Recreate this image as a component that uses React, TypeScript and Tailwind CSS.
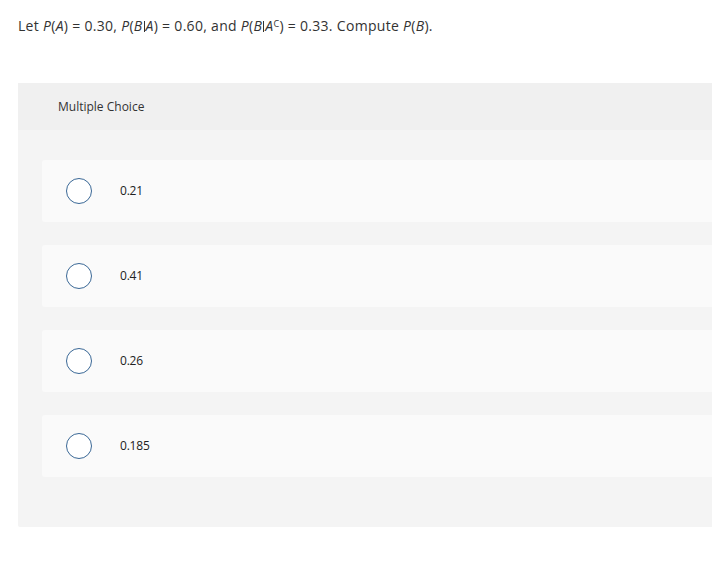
import React from "react";

const font = { fontFamily: '"Open Sans", "Liberation Sans", sans-serif' };

function I({ children }: { children: React.ReactNode }) {
  return <span className="italic">{children}</span>;
}

function Bar() {
  return <span className="inline-block w-[1px] h-[11px] bg-[#333] mx-[1px] align-[-1px]" />;
}

const options = ["0.21", "0.41", "0.26", "0.185"];

export default function App() {
  return (
    <div className="w-[712px] h-[565px] overflow-hidden bg-white text-[#333]" style={font}>
      <div className="pl-[18px] pt-[16px] h-[83px] text-[14px] leading-[20px] tracking-[0.3px]">
        Let <I>P</I>(<I>A</I>) = 0.30, <I>P</I>(<I>B</I>
        <Bar />
        <I>A</I>) = 0.60, and <I>P</I>(<I>B</I>
        <Bar />
        <I>A</I>
        <sup className="text-[9px] not-italic">C</sup>) = 0.33. Compute <I>P</I>(<I>B</I>).
      </div>
      <div className="ml-[18px] w-[720px] rounded-l-[2px] bg-[#f4f4f4]">
        <div className="h-[47px] bg-[#f0f0f0] pl-[40px] flex items-center text-[12px] text-[#333]">
          Multiple Choice
        </div>
        <div className="pt-[30px] pb-[50px] pl-[24px] flex flex-col gap-[23px]">
          {options.map((o) => (
            <div key={o} className="h-[62px] bg-[#fafafa] rounded-l-[3px] flex items-center pl-[24px]">
              <div className="w-[26px] h-[26px] rounded-full border-[1.5px] border-[#3a6896] bg-white" />
              <span className="ml-[28px] text-[12px] text-[#222] tracking-[-0.2px]">{o}</span>
            </div>
          ))}
        </div>
      </div>
    </div>
  );
}
